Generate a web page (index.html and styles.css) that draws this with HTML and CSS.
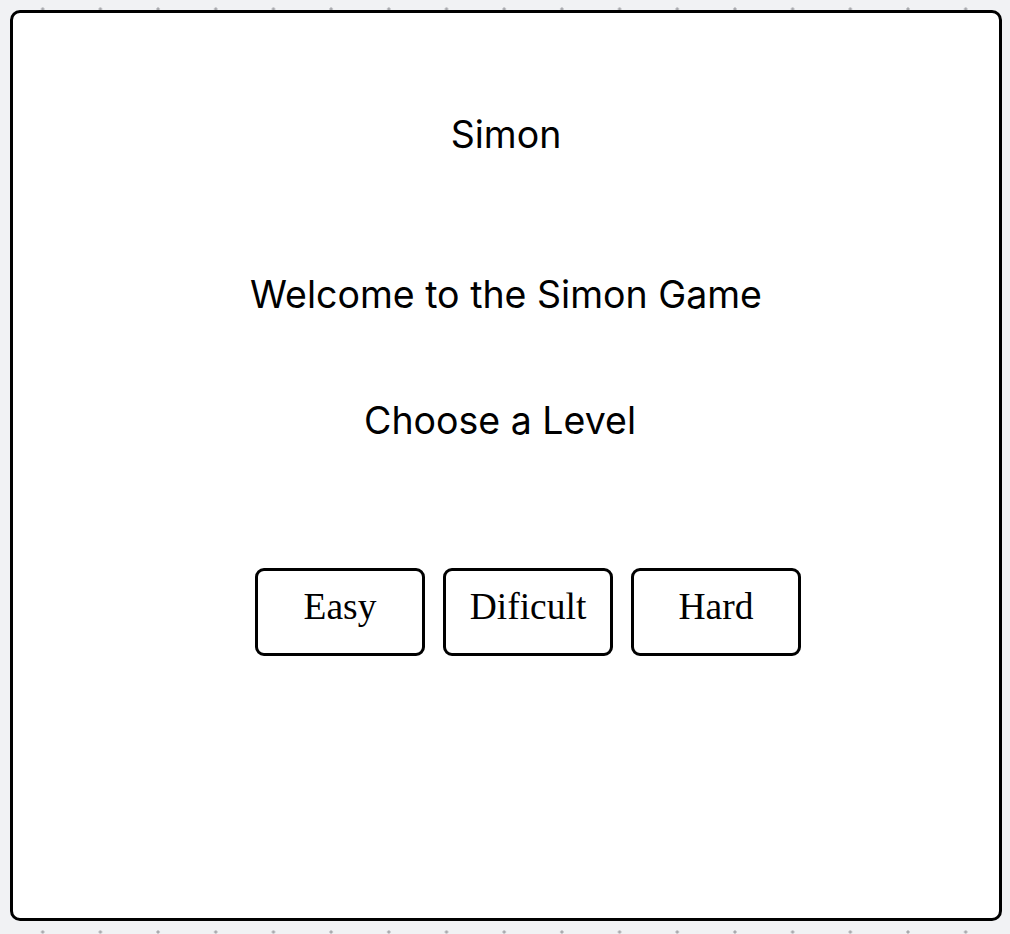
FILE: index.html
```html
<!DOCTYPE html>
<html lang="en">
<head>
<meta charset="utf-8">
<title>Simon</title>
<link rel="stylesheet" href="styles.css">
</head>
<body>
<main class="card">
  <h1 class="title">Simon</h1>
  <p class="welcome">Welcome to the Simon Game</p>
  <p class="choose">Choose a Level</p>
  <div class="levels">
    <button class="level">Easy</button>
    <button class="level">Dificult</button>
    <button class="level">Hard</button>
  </div>
</main>
</body>
</html>
```

FILE: styles.css
```css
html, body {
  margin: 0;
  padding: 0;
}

body {
  width: 1010px;
  height: 934px;
  background-color: #f1f2f4;
  background-image: radial-gradient(circle, #a9aaae 0, #a9aaae 1.3px, transparent 1.9px);
  background-size: 57.7px 57.7px;
  background-position: 13.85px -19.85px;
  overflow: hidden;
}

.card {
  box-sizing: border-box;
  width: 992px;
  height: 911px;
  margin: 10px 8px 13px 10px;
  background: #fff;
  border: 3px solid #000;
  border-radius: 10px;
  display: flex;
  flex-direction: column;
  align-items: center;
  padding-top: 100px;
  font-family: Inter, "Noto Sans", sans-serif;
  color: #000;
}

.title,
.welcome,
.choose {
  margin: 0;
  font-size: 37.5px;
  font-weight: 400;
  line-height: 44px;
}

.welcome {
  margin-top: 116px;
}

.choose {
  margin-top: 82px;
  padding-right: 12px;
}

.levels {
  display: flex;
  justify-content: center;
  gap: 18px;
  margin-top: 125px;
  padding-left: 44px;
}

.level {
  box-sizing: border-box;
  width: 170px;
  height: 88px;
  padding: 15px 0 26px;
  background: #fff;
  border: 3px solid #000;
  border-radius: 9px;
  font-family: "Liberation Serif", "Times New Roman", serif;
  font-size: 37.5px;
  line-height: 41px;
  color: #000;
  cursor: pointer;
}
```
